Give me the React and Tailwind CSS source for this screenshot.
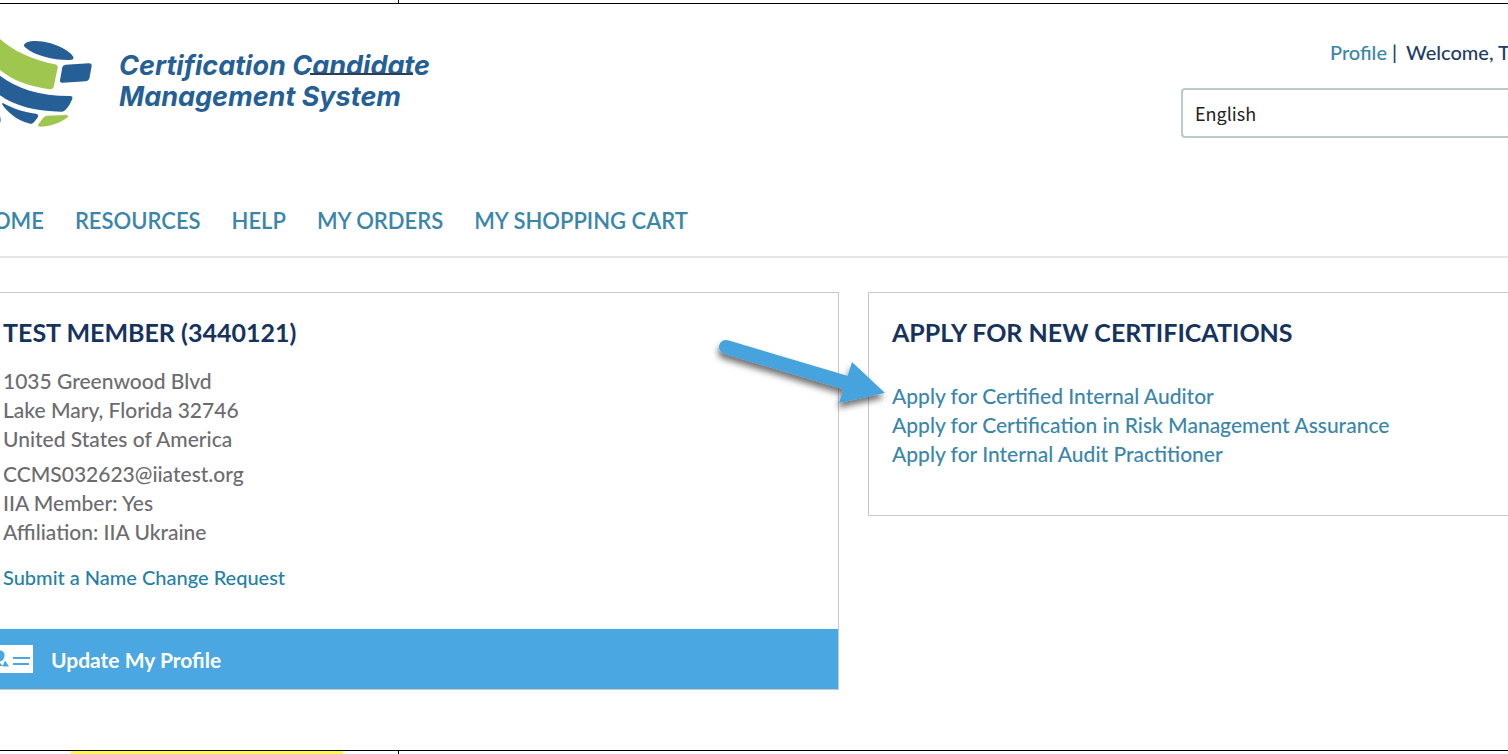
const navLinks = ['HOME', 'RESOURCES', 'HELP', 'MY ORDERS', 'MY SHOPPING CART'];

const certifications = [
  'Apply for Certified Internal Auditor',
  'Apply for Certification in Risk Management Assurance',
  'Apply for Internal Audit Practitioner',
];

function Logo() {
  return (
    <svg viewBox="0 48 282 282" className="w-[94px] h-[94px] shrink-0" aria-hidden="true">
      <path fill="#255f96" d="M72 75C78 60 116 60 150 69C184 79 216 99 220 111C222 118 218 120 209 120C164 121 106 109 75 82Q71 78 72 75Z" />
      <path fill="#9fc750" d="M0 57C40 92 94 119 165 133Q174 135 173 143L161 201Q158 209 149 208C84 198 36 180 0 150Z" />
      <path fill="#255f96" d="M197 134L267 130Q276 130 275 138L268 176Q265 183 257 184L188 188Q179 189 180 181L187 142Q189 135 197 134Z" />
      <path fill="#255f96" d="M0 167C50 205 118 228 210 228Q219 228 217 236C212 250 204 262 196 270Q192 275 184 275C112 275 42 258 0 226Z" />
      <path fill="#255f96" d="M7 248C38 264 68 276 108 281Q116 283 114 290C110 297 104 305 98 310Q93 313 86 310C52 301 22 276 7 254Z" />
      <path fill="#9fc750" d="M140 287L198 285Q206 286 204 291C184 307 152 320 119 320Q112 319 115 313L130 293Q134 288 140 287Z" />
      <path fill="#255f96" d="M0 287Q4 300 0 310Z" />
    </svg>
  );
}

function ProfileCardIcon() {
  return (
    <svg viewBox="0 0 33 28" className="w-[33px] h-7 shrink-0" aria-hidden="true">
      <path fill="#fff" d="M0 0H33V28H0Z" />
      <path fill="#4ba7e1" d="M0 5.500C3 5.500 5 8 4.500 11C4 14 3 15 1.500 16L0 16.500ZM0 18L3 21H0ZM5 15.500L9 21.500H2.500Z" />
      <path fill="#4ba7e1" d="M13 12H30V14H13ZM13 18H29V20H13Z" />
    </svg>
  );
}

function PointerArrow() {
  return (
    <svg
      viewBox="0 0 190 90"
      className="absolute -left-[162px] top-[35px] w-[190px] h-[90px] pointer-events-none"
      aria-hidden="true"
    >
      <defs>
        <filter id="arrow-shadow" x="-20%" y="-20%" width="140%" height="160%">
          <feDropShadow dx="-1" dy="5" stdDeviation="3" floodColor="#000" floodOpacity="0.55" />
        </filter>
      </defs>
      <g fill="#46a3de" filter="url(#arrow-shadow)">
        <path stroke="#46a3de" strokeWidth="14" strokeLinecap="round" d="M19 19L140 55" />
        <path d="M145 34L178 65L132 75Z" />
      </g>
    </svg>
  );
}

function Header() {
  return (
    <header className="flex justify-between items-start pt-8">
      <div className="flex items-start gap-[25px]">
        <Logo />
        <h1 className="relative pt-[14px] font-['Inter',sans-serif] text-[27px] leading-[31px] font-bold italic text-[#255f96] whitespace-nowrap">
          Certification Candidate
          <br />
          Management System
          <span className="absolute left-[191px] top-[37px] w-[103px] h-[2px] bg-[#2c3c55]" />
        </h1>
      </div>

      <div className="w-[327px] shrink-0">
        <p className="pl-[149px] pt-[2px] text-xl leading-7 font-medium text-[#1d3d68] whitespace-nowrap">
          <a href="#profile" className="text-[#3a86aa]">Profile</a>
          <span className="ml-[5px] mr-[9px]">|</span>
          Welcome, T
        </p>
        <select
          aria-label="Language"
          defaultValue="English"
          className="appearance-none block mt-[22px] w-full h-[50px] pl-3 bg-white border-2 border-r-0 border-[#b9cdc8] rounded-l-sm font-['Noto_Sans_CJK_JP',sans-serif] text-lg leading-7 text-[#222]"
        >
          <option>English</option>
        </select>
      </div>
    </header>
  );
}

function MainNav() {
  return (
    <nav className="mt-[67px] pb-[19px] border-b-2 border-[#e6e6e6]">
      <ul className="flex gap-[31px] -ml-6 text-[22px] leading-8 font-semibold text-[#3a86aa] whitespace-nowrap">
        {navLinks.map((label) => (
          <li key={label}>
            <a href="#nav">{label}</a>
          </li>
        ))}
      </ul>
    </nav>
  );
}

function MemberCard() {
  return (
    <section className="border border-l-0 border-[#c9c9c9]">
      <div className="pl-[3px] pt-[23px] pb-[37px] text-[21px] leading-[29px] font-medium text-[#6c6c6f]">
        <h2 className="text-[25px] leading-8 font-bold text-[#16335f]">TEST MEMBER (3440121)</h2>
        <address className="not-italic mt-[18px]">
          1035 Greenwood Blvd
          <br />
          Lake Mary, Florida 32746
          <br />
          United States of America
        </address>
        <p className="mt-[6px]">
          CCMS032623@iiatest.org
          <br />
          IIA Member: Yes
          <br />
          Affiliation: IIA Ukraine
        </p>
        <a href="#name-change" className="block mt-[17px] text-xl leading-[29px] text-[#2480a6]">
          Submit a Name Change Request
        </a>
      </div>
      <button type="button" className="flex items-center gap-[18px] w-full h-[60px] bg-[#4ba7e1] text-white text-[21px] leading-[29px] font-bold">
        <ProfileCardIcon />
        Update My Profile
      </button>
    </section>
  );
}

function ApplyCard() {
  return (
    <section className="relative self-start pl-[23px] pt-[23px] pb-[47px] border border-r-0 border-[#c9c9c9]">
      <h2 className="text-[25px] leading-8 font-bold text-[#16335f]">APPLY FOR NEW CERTIFICATIONS</h2>
      <ul className="mt-[33px] text-[21px] leading-[29px] font-medium text-[#3a86aa]">
        {certifications.map((label) => (
          <li key={label}>
            <a href="#apply">{label}</a>
          </li>
        ))}
      </ul>
      <PointerArrow />
    </section>
  );
}

export default function App() {
  return (
    <div className="overflow-hidden bg-white font-['Lato',sans-serif]">
      <div className="h-1 border-b border-black">
        <div className="w-[399px] h-full border-r border-black" />
      </div>

      <Header />
      <MainNav />

      <main className="grid grid-cols-[839fr_640fr] gap-[29px] pt-[34px] pb-[60px]">
        <MemberCard />
        <ApplyCard />
      </main>

      <div className="h-1 border-t border-black">
        <div className="w-[399px] h-full pl-[71px] border-r border-black">
          <div className="w-[272px] h-full bg-[#fdf84f]" />
        </div>
      </div>
    </div>
  );
}
